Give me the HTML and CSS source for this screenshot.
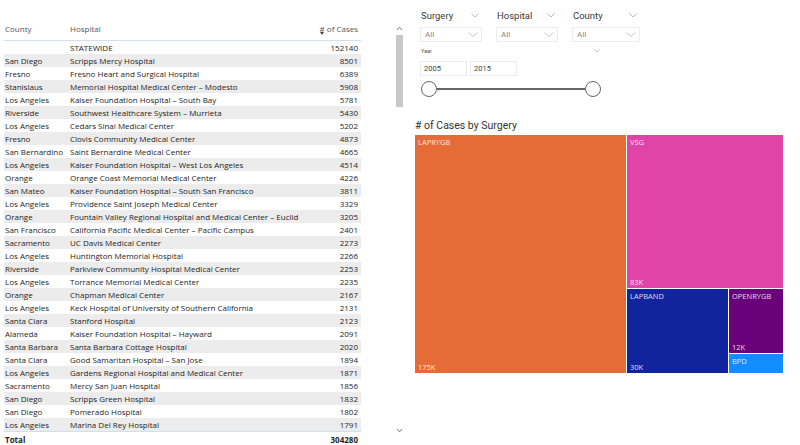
FILE: index.html
```html
<!DOCTYPE html>
<html>
<head>
<meta charset="utf-8">
<link rel="stylesheet" href="styles.css">
</head>
<body>
<div class="page">
  <div class="left">
    <div class="table">
      <div class="row head">
        <div class="c1">County</div>
        <div class="c2">Hospital</div>
        <div class="c3"><span class="sortwrap">#<span class="sort"></span></span> of Cases</div>
      </div>
      <div class="body">
        <div class="row"><div class="c1"></div><div class="c2">STATEWIDE</div><div class="c3">152140</div></div>
        <div class="row"><div class="c1">San Diego</div><div class="c2">Scripps Mercy Hospital</div><div class="c3">8501</div></div>
        <div class="row"><div class="c1">Fresno</div><div class="c2">Fresno Heart and Surgical Hospital</div><div class="c3">6389</div></div>
        <div class="row"><div class="c1">Stanislaus</div><div class="c2">Memorial Hospital Medical Center – Modesto</div><div class="c3">5908</div></div>
        <div class="row"><div class="c1">Los Angeles</div><div class="c2">Kaiser Foundation Hospital – South Bay</div><div class="c3">5781</div></div>
        <div class="row"><div class="c1">Riverside</div><div class="c2">Southwest Healthcare System – Murrieta</div><div class="c3">5430</div></div>
        <div class="row"><div class="c1">Los Angeles</div><div class="c2">Cedars Sinai Medical Center</div><div class="c3">5202</div></div>
        <div class="row"><div class="c1">Fresno</div><div class="c2">Clovis Community Medical Center</div><div class="c3">4873</div></div>
        <div class="row"><div class="c1">San Bernardino</div><div class="c2">Saint Bernardine Medical Center</div><div class="c3">4665</div></div>
        <div class="row"><div class="c1">Los Angeles</div><div class="c2">Kaiser Foundation Hospital – West Los Angeles</div><div class="c3">4514</div></div>
        <div class="row"><div class="c1">Orange</div><div class="c2">Orange Coast Memorial Medical Center</div><div class="c3">4226</div></div>
        <div class="row"><div class="c1">San Mateo</div><div class="c2">Kaiser Foundation Hospital – South San Francisco</div><div class="c3">3811</div></div>
        <div class="row"><div class="c1">Los Angeles</div><div class="c2">Providence Saint Joseph Medical Center</div><div class="c3">3329</div></div>
        <div class="row"><div class="c1">Orange</div><div class="c2">Fountain Valley Regional Hospital and Medical Center – Euclid</div><div class="c3">3205</div></div>
        <div class="row"><div class="c1">San Francisco</div><div class="c2">California Pacific Medical Center – Pacific Campus</div><div class="c3">2401</div></div>
        <div class="row"><div class="c1">Sacramento</div><div class="c2">UC Davis Medical Center</div><div class="c3">2273</div></div>
        <div class="row"><div class="c1">Los Angeles</div><div class="c2">Huntington Memorial Hospital</div><div class="c3">2266</div></div>
        <div class="row"><div class="c1">Riverside</div><div class="c2">Parkview Community Hospital Medical Center</div><div class="c3">2253</div></div>
        <div class="row"><div class="c1">Los Angeles</div><div class="c2">Torrance Memorial Medical Center</div><div class="c3">2235</div></div>
        <div class="row"><div class="c1">Orange</div><div class="c2">Chapman Medical Center</div><div class="c3">2167</div></div>
        <div class="row"><div class="c1">Los Angeles</div><div class="c2">Keck Hospital of University of Southern California</div><div class="c3">2131</div></div>
        <div class="row"><div class="c1">Santa Clara</div><div class="c2">Stanford Hospital</div><div class="c3">2123</div></div>
        <div class="row"><div class="c1">Alameda</div><div class="c2">Kaiser Foundation Hospital – Hayward</div><div class="c3">2091</div></div>
        <div class="row"><div class="c1">Santa Barbara</div><div class="c2">Santa Barbara Cottage Hospital</div><div class="c3">2020</div></div>
        <div class="row"><div class="c1">Santa Clara</div><div class="c2">Good Samaritan Hospital – San Jose</div><div class="c3">1894</div></div>
        <div class="row"><div class="c1">Los Angeles</div><div class="c2">Gardens Regional Hospital and Medical Center</div><div class="c3">1871</div></div>
        <div class="row"><div class="c1">Sacramento</div><div class="c2">Mercy San Juan Hospital</div><div class="c3">1856</div></div>
        <div class="row"><div class="c1">San Diego</div><div class="c2">Scripps Green Hospital</div><div class="c3">1832</div></div>
        <div class="row"><div class="c1">San Diego</div><div class="c2">Pomerado Hospital</div><div class="c3">1802</div></div>
        <div class="row"><div class="c1">Los Angeles</div><div class="c2">Marina Del Rey Hospital</div><div class="c3">1791</div></div>
      </div>
      <div class="row total"><div class="c1">Total</div><div class="c2"></div><div class="c3">304280</div></div>
    </div>
    <div class="scrollbar">
      <svg class="arrow" width="7" height="5" viewBox="0 0 7 5"><path d="M1 4 L3.5 1.2 L6 4" fill="none" stroke="#777" stroke-width="1"/></svg>
      <div class="thumb"></div>
      <div class="track"></div>
      <svg class="arrow" width="7" height="5" viewBox="0 0 7 5"><path d="M1 1 L3.5 3.8 L6 1" fill="none" stroke="#777" stroke-width="1"/></svg>
    </div>
  </div>

  <div class="right">
    <div class="slicers">
      <div class="slicer s1">
        <div class="s-head"><span>Surgery</span><svg class="chev" width="8" height="5" viewBox="0 0 8 5"><path d="M0.5 0.5 L4 4 L7.5 0.5" fill="none" stroke="#aaa" stroke-width="0.8"/></svg></div>
        <div class="s-box"><span>All</span><svg class="chev" width="10" height="5" viewBox="0 0 10 5"><path d="M0.5 0.5 L5 4.5 L9.5 0.5" fill="none" stroke="#b5b5b5" stroke-width="0.8"/></svg></div>
      </div>
      <div class="slicer s2">
        <div class="s-head"><span>Hospital</span><svg class="chev" width="8" height="5" viewBox="0 0 8 5"><path d="M0.5 0.5 L4 4 L7.5 0.5" fill="none" stroke="#aaa" stroke-width="0.8"/></svg></div>
        <div class="s-box"><span>All</span><svg class="chev" width="10" height="5" viewBox="0 0 10 5"><path d="M0.5 0.5 L5 4.5 L9.5 0.5" fill="none" stroke="#b5b5b5" stroke-width="0.8"/></svg></div>
      </div>
      <div class="slicer s3">
        <div class="s-head"><span>County</span><svg class="chev" width="8" height="5" viewBox="0 0 8 5"><path d="M0.5 0.5 L4 4 L7.5 0.5" fill="none" stroke="#aaa" stroke-width="0.8"/></svg></div>
        <div class="s-box"><span>All</span><svg class="chev" width="10" height="5" viewBox="0 0 10 5"><path d="M0.5 0.5 L5 4.5 L9.5 0.5" fill="none" stroke="#b5b5b5" stroke-width="0.8"/></svg></div>
      </div>
    </div>
    <div class="year">
      <div class="y-head"><span>Year</span><svg class="chev" width="6" height="4" viewBox="0 0 6 4"><path d="M0.5 0.5 L3 3 L5.5 0.5" fill="none" stroke="#aaa" stroke-width="0.7"/></svg></div>
      <div class="y-inputs"><div class="y-in">2005</div><div class="y-in">2015</div></div>
      <div class="slider"><span class="knob"></span><span class="line"></span><span class="knob"></span></div>
    </div>
    <div class="chart">
      <div class="c-title"># of Cases by Surgery</div>
      <div class="tree">
        <div class="tile laprygb"><span class="lab">LAPRYGB</span><span class="val">175K</span></div>
        <div class="tcol">
          <div class="tile vsg"><span class="lab">VSG</span><span class="val">83K</span></div>
          <div class="trow">
            <div class="tile lapband"><span class="lab">LAPBAND</span><span class="val">30K</span></div>
            <div class="tcol2">
              <div class="tile open"><span class="lab">OPENRYGB</span><span class="val">12K</span></div>
              <div class="tile bpd"><span class="lab">BPD</span></div>
            </div>
          </div>
        </div>
      </div>
    </div>
  </div>
</div>
</body>
</html>
```

FILE: styles.css
```css
* { box-sizing: border-box; }
html, body { margin: 0; padding: 0; background: #fff; }
body { width: 800px; height: 445px; overflow: hidden; font-family: "Open Sans", "Noto Sans", sans-serif; color: #252423; }
.page { display: flex; height: 445px; }

.left { display: flex; width: 412px; padding: 21px 0 0 4px; }
.table { width: 357px; font-size: 8px; }
.row { display: flex; height: 13px; line-height: 13px; white-space: nowrap; }
.c1 { flex: none; width: 66px; padding-left: 1px; overflow: visible; }
.c2 { flex: 1; min-width: 0; }
.c3 { flex: none; width: 70px; text-align: right; padding-right: 3px; }
.head { height: 20px; line-height: 15px; color: #555; border-bottom: 1px solid #cfe0f0; }
.sortwrap { position: relative; display: inline-block; }
.sort { position: absolute; left: 0; top: 11px; width: 0; height: 0; border-left: 2.5px solid transparent; border-right: 2.5px solid transparent; border-top: 3px solid #444; }
.body .row:nth-child(even) { background: #ececec; }
.total { height: 14px; line-height: 15px; font-weight: bold; border-top: 1px solid #cfe0f0; }

.scrollbar { width: 8px; margin-left: 34px; display: flex; flex-direction: column; align-items: center; padding-top: 5px; }
.scrollbar .arrow { flex: none; }
.thumb { width: 7px; height: 72px; background: #c8c8c8; margin-top: 4px; }
.track { flex: 1; }
.scrollbar .arrow:last-child { margin-bottom: 12px; }

.right { flex: 1; padding: 8px 0 0 8px; }
.slicers { display: flex; gap: 14px; font-family: "Roboto", "DejaVu Sans", sans-serif; }
.slicer { width: 62px; }
.s3 { width: 68px; }
.s-head { display: flex; justify-content: space-between; align-items: center; height: 14px; font-size: 9.5px; color: #3a3a3a; padding: 0 3px 0 1px; }
.s-box { margin-top: 5px; height: 15px; border: 1px solid #ececec; display: flex; justify-content: space-between; align-items: center; padding: 0 3px 0 4px; font-size: 8px; color: #888; }
.year { width: 186px; margin-top: 5px; font-family: "Roboto", sans-serif; }
.y-head { display: flex; justify-content: space-between; align-items: center; height: 8px; font-size: 5.5px; color: #555; padding: 0 6px 0 1px; }
.y-inputs { display: flex; gap: 3px; margin-top: 6px; }
.y-in { width: 47px; height: 15px; border: 1px solid #ececec; font-size: 7.5px; line-height: 13px; padding-left: 3px; color: #444; }
.slider { display: flex; align-items: center; margin-top: 5px; margin-left: 1px; width: 180px; }
.knob { width: 16px; height: 16px; border: 1.2px solid #666; border-radius: 50%; background: #fff; flex: none; }
.line { flex: 1; height: 2px; background: #666; }

.chart { margin-top: 22px; margin-left: -5px; width: 368px; }
.c-title { font-family: "Roboto", "DejaVu Sans", sans-serif; font-size: 10.5px; color: #333; height: 16px; line-height: 14px; }
.tree { display: flex; gap: 1px; height: 238px; }
.tile { color: rgba(255,255,255,0.85); font-family: "Open Sans", sans-serif; font-size: 7.5px; display: flex; flex-direction: column; justify-content: space-between; padding: 2px 3px 1px 3px; overflow: hidden; }
.laprygb { width: 211px; background: #e66c37; }
.tcol { flex: 1; display: flex; flex-direction: column; gap: 1px; }
.vsg { height: 153px; background: #e044a7; }
.trow { flex: 1; display: flex; gap: 1px; }
.lapband { width: 101px; background: #12239e; }
.tcol2 { flex: 1; display: flex; flex-direction: column; gap: 1px; }
.open { flex: 1; background: #6b007b; }
.bpd { height: 19px; background: #118dff; }
```
